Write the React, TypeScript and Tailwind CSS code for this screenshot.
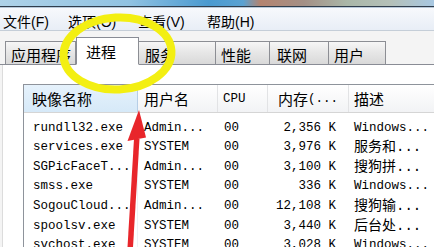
import React from 'react';

const MENUS = [
  { label: '文件(F)', w: 'w-[65px]' },
  { label: '选项(O)', w: 'w-[70px]' },
  { label: '查看(V)', w: 'w-[69px]' },
  { label: '帮助(H)', w: 'w-[60px]' },
];

const TABS = [
  { label: '应用程序', w: 'w-[71px]', pl: 'pl-[5px]' },
  { label: '进程', w: 'w-[63px]', pl: 'pl-[9px]', active: true },
  { label: '服务', w: 'w-[78px]', pl: 'pl-[6px]' },
  { label: '性能', w: 'w-[55px]', pl: 'pl-[5px]' },
  { label: '联网', w: 'w-[60px]', pl: 'pl-[7px]' },
  { label: '用户', w: 'w-[58px]', pl: 'pl-[5px]' },
];

const ROWS = [
  ['rundll32.exe', 'Admin...', '00', '2,356 K', 'Windows...'],
  ['services.exe', 'SYSTEM', '00', '3,976 K', '服务和...'],
  ['SGPicFaceT...', 'Admin...', '00', '3,100 K', '搜狗拼...'],
  ['smss.exe', 'SYSTEM', '00', '336 K', 'Windows...'],
  ['SogouCloud...', 'Admin...', '00', '12,108 K', '搜狗输...'],
  ['spoolsv.exe', 'SYSTEM', '00', '3,440 K', '后台处...'],
  ['svchost.exe', 'SYSTEM', '00', '3,028 K', 'Windows...'],
];

const cjk = "font-['Liberation_Sans','Noto_Sans_CJK_SC',sans-serif]";
const mono = "font-['Liberation_Mono','Noto_Sans_CJK_SC',monospace]";
const cols = 'grid grid-cols-[114px_80px_50px_81px_1fr]';

export default function App() {
  return (
    <div className={`relative w-[434px] h-[247px] overflow-hidden flex flex-col bg-[#f4f4f4] text-black ${cjk}`}>
      {/* title bar strip */}
      <div className="shrink-0 h-[6px] bg-[linear-gradient(90deg,#aed2e8_0%,#90c2e2_30%,#4a9ad0_48%,#5aa2d2_56%,#b48470_60%,#a49086_70%,#aab7a8_80%,#b4c0b8_90%,#a8c8e2_100%)]" />
      <div className="shrink-0 h-px bg-[#2f3d4c]" />
      <div className="shrink-0 h-px bg-[#b9c9d9]" />

      {/* menu bar */}
      <div className="shrink-0 h-[23px] flex items-center pl-[3px] text-[14px] leading-none bg-[linear-gradient(#f7f9fc,#e8eef6)] border-b border-[#c5ced8]">
        {MENUS.map((m) => (
          <div key={m.label} className={`${m.w} pt-[5px]`}>{m.label}</div>
        ))}
      </div>

      {/* tabs */}
      <div className="shrink-0 h-[34px] flex items-end pl-[5px] border-b border-[#898c95]">
        {TABS.map((t) =>
          t.active ? (
            <div
              key={t.label}
              className={`${t.w} ${t.pl} h-[28px] -mb-px bg-white border border-[#898c95] border-b-white text-[15px] leading-none flex items-center pt-[2px]`}
            >
              {t.label}
            </div>
          ) : (
            <div
              key={t.label}
              className={`${t.w} ${t.pl} h-[23px] bg-[linear-gradient(#f6f6f6,#e6e6e6_50%,#d9d9d9)] border border-[#8c8e94] border-b-0 -ml-px first:ml-0 text-[15px] leading-none flex items-center pt-[5px]`}
            >
              {t.label}
            </div>
          )
        )}
      </div>

      {/* panel */}
      <div className="flex-1 min-h-0 overflow-hidden bg-white ml-[2px] border-l border-[#dcdcdc] pt-[19px] pl-[20px]">
        <div className="border-l border-t border-[#8e939b] h-full">
          {/* header */}
          <div className={`${cols} h-[28px] text-[15px] leading-none bg-[linear-gradient(#ffffff,#f2f3f5)] border-b border-[#d5d5d5]`}>
            <div className="pl-[8px] pt-[2px] flex items-center bg-[linear-gradient(#e6f2fc,#d6e9f8)] border-r border-[#b6cee6]">映像名称</div>
            <div className="pl-[6px] pt-[2px] flex items-center border-r border-[#e2e3e5]">用户名</div>
            <div className={`pl-[5px] pt-[2px] flex items-center border-r border-[#e2e3e5] text-[12.5px] ${mono}`}>CPU</div>
            <div className="pl-[10px] pt-[2px] flex items-center border-r border-[#e2e3e5]">
              内存<span className={`text-[12.5px] ${mono}`}>(...</span>
            </div>
            <div className="pl-[5px] pt-[2px] flex items-center">描述</div>
          </div>

          {/* rows */}
          <div className="pt-[5px]">
            {ROWS.map((r) => (
              <div key={r[0]} className={`${cols} h-[19.6px] items-center text-[12.5px] leading-none ${mono}`}>
                <div className="pl-[9px] h-full flex items-center border-r border-[#eef1f5]">{r[0]}</div>
                <div className="pl-[6px]">{r[1]}</div>
                <div className="pl-[6px]">{r[2]}</div>
                <div className="pr-[13px] text-right">{r[3]}</div>
                <div className={`pl-[5px] ${/^[A-Za-z]/.test(r[4]) ? '' : 'text-[14px]'}`}>{r[4]}</div>
              </div>
            ))}
          </div>
        </div>
      </div>

      {/* annotation overlay: yellow circle + red arrow */}
      <svg className="absolute left-0 top-0 pointer-events-none" width="434" height="247" viewBox="0 0 434 247">
        <ellipse cx="117.5" cy="53.5" rx="54" ry="36" fill="none" stroke="#f3ef12" strokeWidth="8" transform="rotate(-3 117.5 53.5)" />
        <polygon points="134,139 139.5,139 133,247 127.5,247" fill="#e8262b" />
        <polygon points="139,110 127.5,141 146,137.5" fill="#e8262b" />
      </svg>
    </div>
  );
}
